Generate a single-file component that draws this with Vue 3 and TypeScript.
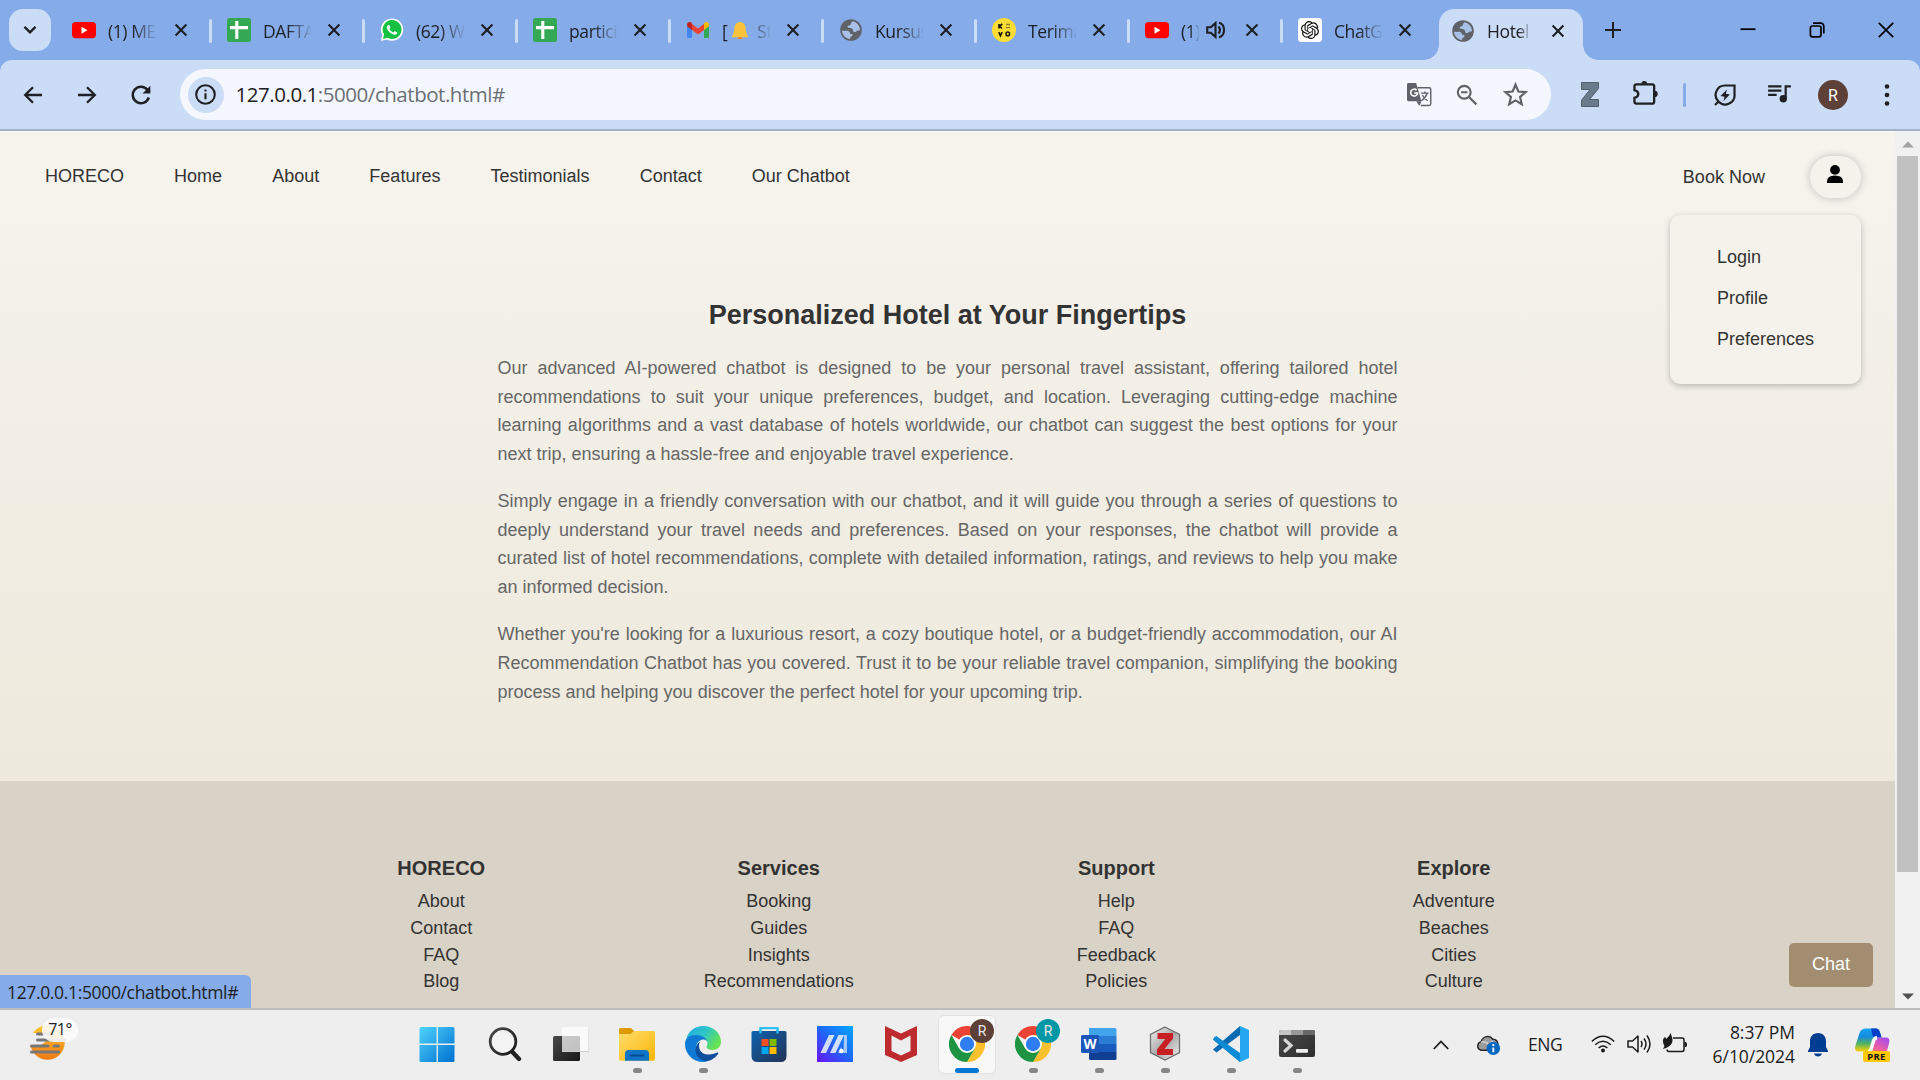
<script setup lang="ts">
interface Tab {
  icon: string
  title: string
  bell?: boolean
  audio?: boolean
}

const tabs: Tab[] = [
  { icon: 'youtube', title: '(1) ME' },
  { icon: 'sheets', title: 'DAFTA' },
  { icon: 'whatsapp', title: '(62) W' },
  { icon: 'sheets', title: 'partici' },
  { icon: 'gmail', title: 'St', bell: true },
  { icon: 'globe', title: 'Kursus' },
  { icon: 'yellow', title: 'Terima' },
  { icon: 'youtube', title: '(1)', audio: true },
  { icon: 'chatgpt', title: 'ChatG' },
]

const navLinks: string[] = ['HORECO', 'Home', 'About', 'Features', 'Testimonials', 'Contact', 'Our Chatbot']
const userMenu: string[] = ['Login', 'Profile', 'Preferences']

const paragraphs: string[] = [
  'Our advanced AI-powered chatbot is designed to be your personal travel assistant, offering tailored hotel recommendations to suit your unique preferences, budget, and location. Leveraging cutting-edge machine learning algorithms and a vast database of hotels worldwide, our chatbot can suggest the best options for your next trip, ensuring a hassle-free and enjoyable travel experience.',
  'Simply engage in a friendly conversation with our chatbot, and it will guide you through a series of questions to deeply understand your travel needs and preferences. Based on your responses, the chatbot will provide a curated list of hotel recommendations, complete with detailed information, ratings, and reviews to help you make an informed decision.',
  "Whether you're looking for a luxurious resort, a cozy boutique hotel, or a budget-friendly accommodation, our AI Recommendation Chatbot has you covered. Trust it to be your reliable travel companion, simplifying the booking process and helping you discover the perfect hotel for your upcoming trip.",
]

const footerColumns: { title: string; links: string[] }[] = [
  { title: 'HORECO', links: ['About', 'Contact', 'FAQ', 'Blog'] },
  { title: 'Services', links: ['Booking', 'Guides', 'Insights', 'Recommendations'] },
  { title: 'Support', links: ['Help', 'FAQ', 'Feedback', 'Policies'] },
  { title: 'Explore', links: ['Adventure', 'Beaches', 'Cities', 'Culture'] },
]

interface TaskApp {
  icon: string
  running?: boolean
  active?: boolean
  badge?: string
}

const taskApps: TaskApp[] = [
  { icon: 'start' },
  { icon: 'search' },
  { icon: 'taskview' },
  { icon: 'explorer', running: true },
  { icon: 'edge', running: true },
  { icon: 'store' },
  { icon: 'myasus' },
  { icon: 'mcafee' },
  { icon: 'chrome', active: true, badge: '#5d4037' },
  { icon: 'chrome', running: true, badge: '#0097a7' },
  { icon: 'word', running: true },
  { icon: 'zotero', running: true },
  { icon: 'vscode', running: true },
  { icon: 'terminal', running: true },
]
</script>

<template>
  <div class="screen">
    <svg class="defs" width="0" height="0" aria-hidden="true">
      <defs>
        <linearGradient id="gStart" x1="0" y1="0" x2="1" y2="1"><stop offset="0" stop-color="#4fd3fd" /><stop offset="1" stop-color="#0070cf" /></linearGradient>
        <linearGradient id="gDark" x1="0" y1="0" x2="1" y2="1"><stop offset="0" stop-color="#4a4a4a" /><stop offset="1" stop-color="#161616" /></linearGradient>
        <linearGradient id="gFolder" x1="0" y1="0" x2="1" y2="1"><stop offset="0" stop-color="#ffdc6e" /><stop offset="1" stop-color="#fab705" /></linearGradient>
        <linearGradient id="gEdgeTop" x1="0" y1="0" x2="1" y2="0.5"><stop offset="0" stop-color="#1fa8e8" /><stop offset="0.55" stop-color="#2fc6c8" /><stop offset="1" stop-color="#66e352" /></linearGradient>
        <linearGradient id="gStore" x1="0" y1="0" x2="1" y2="1"><stop offset="0" stop-color="#0f62b0" /><stop offset="1" stop-color="#233253" /></linearGradient>
        <linearGradient id="gAsus" x1="0" y1="1" x2="1" y2="0"><stop offset="0" stop-color="#6a12f5" /><stop offset="0.5" stop-color="#1f66fa" /><stop offset="1" stop-color="#00a8ff" /></linearGradient>
        <linearGradient id="gSun" x1="0" y1="0" x2="0" y2="1"><stop offset="0" stop-color="#fcc934" /><stop offset="1" stop-color="#f07a12" /></linearGradient>
        <linearGradient id="gHex" x1="0" y1="0" x2="1" y2="1"><stop offset="0" stop-color="#f5f5f5" /><stop offset="0.5" stop-color="#a9a9a9" /><stop offset="1" stop-color="#f0f0f0" /></linearGradient>
        <linearGradient id="gTerm" x1="0" y1="0" x2="1" y2="1"><stop offset="0" stop-color="#4b4b4b" /><stop offset="1" stop-color="#2d2d2d" /></linearGradient>
        <linearGradient id="gCopA" x1="0" y1="0" x2="0" y2="1"><stop offset="0" stop-color="#13a5ef" /><stop offset="0.35" stop-color="#1789e0" /><stop offset="0.65" stop-color="#4fb365" /><stop offset="1" stop-color="#ffd000" /></linearGradient>
        <linearGradient id="gCopB" x1="0.8" y1="0" x2="0.2" y2="1"><stop offset="0" stop-color="#a64cf0" /><stop offset="0.6" stop-color="#f0609f" /><stop offset="1" stop-color="#ff8a55" /></linearGradient>
        <symbol id="i-close" viewBox="0 0 14 14"><path d="M1.6 1.6 12.4 12.4M12.4 1.6 1.6 12.4" stroke="#1d1f24" stroke-width="2.1" fill="none" /></symbol>
        <symbol id="i-youtube" viewBox="0 0 24 24"><rect y="4" width="24" height="16.2" rx="3.6" fill="#f00" /><path d="M9.5 8.7v7l6-3.5z" fill="#fff" /></symbol>
        <symbol id="i-sheets" viewBox="0 0 24 24"><rect width="24" height="24" rx="2.5" fill="#34a853" /><path d="M9.8 3v18M3 9.6h18" stroke="#fff" stroke-width="3.1" /></symbol>
        <symbol id="i-whatsapp" viewBox="0 0 24 24"><path d="M12 .4A11.2 11.2 0 0 0 2.3 17.1L.8 23l6-1.5A11.2 11.2 0 1 0 12 .4z" fill="#fff" /><path d="M12.1 2.1a9.4 9.4 0 0 0-8 14.4L3 20.9l4.5-1.2a9.4 9.4 0 1 0 4.6-17.6z" fill="#14c143" /><path transform="translate(1.7 1.6) scale(.86)" fill="#fff" d="M17.472 14.382c-.297-.149-1.758-.867-2.03-.967-.273-.099-.471-.148-.67.15-.197.297-.767.966-.94 1.164-.173.199-.347.223-.644.075-.297-.15-1.255-.463-2.39-1.475-.883-.788-1.48-1.761-1.653-2.059-.173-.297-.018-.458.13-.606.134-.133.298-.347.446-.52.149-.174.198-.298.298-.497.099-.198.05-.371-.025-.52-.075-.149-.669-1.612-.916-2.207-.242-.579-.487-.5-.669-.51-.173-.008-.371-.01-.57-.01-.198 0-.52.074-.792.372-.272.297-1.04 1.016-1.04 2.479 0 1.462 1.065 2.875 1.213 3.074.149.198 2.096 3.2 5.077 4.487.709.306 1.262.489 1.694.625.712.227 1.36.195 1.871.118.571-.085 1.758-.719 2.006-1.413.248-.694.248-1.289.173-1.413-.074-.124-.272-.198-.57-.347" /></symbol>
        <symbol id="i-gmail" viewBox="0 0 24 24"><path d="M1 8v10.500q0 1.500 1.500 1.500H6v-8.500z" fill="#4285f4" /><path d="M23 8v10.500q0 1.500-1.500 1.500H18v-8.500z" fill="#34a853" /><path d="M18 6v6l5-3.700V6.500C23 3.700 20 3.300 18.300 4.700z" fill="#fbbc04" /><path d="M6 12V6l6 4.500L18 6v6l-6 4.500z" fill="#ea4335" /><path d="M1 6.500v1.800L6 12V6l-.3-1.300C4 3.300 1 3.700 1 6.500z" fill="#c5221f" /></symbol>
        <symbol id="i-globe" viewBox="0 0 24 24"><circle cx="12" cy="12" r="10.800" fill="#5f6368" /><path d="M3 12.500c2.500 1 4 0 6 .4 2.300.4 1.500 3 3.500 3.200 2 .2 1 2.300-.6 2.600-.7.200-.6 1.600-1 2.300C6.500 20.500 3.200 17 3 12.500zM13.800 3.300c3.800.8 7 4.300 7.200 8.500-.7 1.600-1.700.5-2.800.9-1.600.5-1.400 2-3 1.300-1.900-.8-.6-2.600-2.200-3.500-1.500-.8-4.300-.3-4.400-1.800-.1-1.600 2.600-1 3.100-2.300.4-1.200.800-2.600 2.100-3.100z" fill="#a9c0e8" /></symbol>
        <symbol id="i-yellow" viewBox="0 0 24 24"><circle cx="12" cy="12" r="12" fill="#fddd35" /><path d="M7 6v4.500M10.300 6l-2.800 2 2.500 2.500M6.800 14.200l1.600 3.600 1.700-3.600" stroke="#1c1a10" stroke-width="1.700" fill="none" /><path d="M14 6.500h4M14 9.700h4" stroke="#8d7c28" stroke-width="1.300" /><circle cx="15.800" cy="15.900" r="1.800" stroke="#1c1a10" stroke-width="1.500" fill="none" /></symbol>
        <symbol id="i-chatgpt" viewBox="0 0 24 24"><rect width="24" height="24" rx="3.500" fill="#fff" /><path transform="translate(3 3) scale(.75)" fill="#111" d="M22.2819 9.8211a5.9847 5.9847 0 0 0-.5157-4.9108 6.0462 6.0462 0 0 0-6.5098-2.9A6.0651 6.0651 0 0 0 4.9807 4.1818a5.9847 5.9847 0 0 0-3.9977 2.9 6.0462 6.0462 0 0 0 .7427 7.0966 5.98 5.98 0 0 0 .511 4.9107 6.051 6.051 0 0 0 6.5146 2.9001A5.9847 5.9847 0 0 0 13.2599 24a6.0557 6.0557 0 0 0 5.7718-4.2058 5.9894 5.9894 0 0 0 3.9977-2.9001 6.0557 6.0557 0 0 0-.7475-7.0729zm-9.022 12.6081a4.4755 4.4755 0 0 1-2.8764-1.0408l.1419-.0804 4.7783-2.7582a.7948.7948 0 0 0 .3927-.6813v-6.7369l2.02 1.1686a.071.071 0 0 1 .038.052v5.5826a4.504 4.504 0 0 1-4.4945 4.4944zm-9.6607-4.1254a4.4708 4.4708 0 0 1-.5346-3.0137l.142.0852 4.783 2.7582a.7712.7712 0 0 0 .7806 0l5.8428-3.3685v2.3324a.0804.0804 0 0 1-.0332.0615L9.74 19.9502a4.4992 4.4992 0 0 1-6.1408-1.6464zM2.3408 7.8956a4.485 4.485 0 0 1 2.3655-1.9728V11.6a.7664.7664 0 0 0 .3879.6765l5.8144 3.3543-2.0201 1.1685a.0757.0757 0 0 1-.071 0l-4.8303-2.7865A4.504 4.504 0 0 1 2.3408 7.872zm16.5963 3.8558L13.1038 8.364 15.1192 7.2a.0757.0757 0 0 1 .071 0l4.8303 2.7913a4.4944 4.4944 0 0 1-.6765 8.1042v-5.6772a.79.79 0 0 0-.407-.667zm2.0107-3.0231l-.142-.0852-4.7735-2.7818a.7759.7759 0 0 0-.7854 0L9.409 9.2297V6.8974a.0662.0662 0 0 1 .0284-.0615l4.8303-2.7866a4.4992 4.4992 0 0 1 6.6802 4.66zM8.3065 12.863l-2.02-1.1638a.0804.0804 0 0 1-.038-.0567V6.0742a4.4992 4.4992 0 0 1 7.3757-3.4537l-.142.0805L8.704 5.459a.7948.7948 0 0 0-.3927.6813zm1.0976-2.3654l2.602-1.4998 2.6069 1.4998v2.9994l-2.5974 1.4997-2.6067-1.4997Z" /></symbol>

        <symbol id="a-start" viewBox="0 0 36 36"><path d="M2 1h15.600v16.600H.5V2.500Q.5 1 2 1zM18.900 1H34q1.500 0 1.500 1.500v15.100H18.900zM.5 18.900h17.100V36H2Q.5 36 .5 34.500zM18.900 18.900h16.600v15.600Q35.500 36 34 36H18.900z" fill="url(#gStart)" /></symbol>
        <symbol id="a-search" viewBox="0 0 36 36"><path d="M24.500 25 32 33" stroke="#222" stroke-width="4.400" stroke-linecap="round" /><circle cx="16" cy="15.500" r="12.800" fill="#f3f3f3" stroke="url(#gDark)" stroke-width="2.800" /></symbol>
        <symbol id="a-taskview" viewBox="0 0 36 36"><rect x="0" y="10" width="27" height="25" rx="1.500" fill="url(#gDark)" /><rect x="9" y="1" width="27" height="25" rx="1.500" fill="#fff" fill-opacity=".72" /><path d="M9 25.500h27V2" stroke="#cfcfcf" fill="none" /></symbol>
        <symbol id="a-explorer" viewBox="0 0 36 36"><path d="M0 3.500Q0 2 1.500 2h10.500l3 3v5H0z" fill="#dd9a05" /><path d="M0 8h11.500l3.500-3H34.500Q36 5 36 6.500V33q0 1.800-1.500 1.800h-33Q0 34.800 0 33z" fill="url(#gFolder)" /><path d="M6 34.800v-7Q6 24 9.500 24h17q3.500 0 3.500 3.800v7z" fill="#0f74c8" /><path d="M11.500 29.500h13" stroke="#0a4c93" stroke-width="2" stroke-linecap="round" /></symbol>
        <symbol id="a-edge" viewBox="0 0 36 36"><path d="M1 14C3 5 10 0 18 0c10.500 0 18 7.500 18 15.500 0 5-3.500 8.500-8.500 8.500-4 0-6-1.500-6-3 0-1 1-1.500 1-4 0-3.500-3.500-6-8.500-6-6 0-11 3-13 3z" fill="url(#gEdgeTop)" /><path d="M0 18C0 12 5 9 11 9c7 0 11.500 4 11.500 8 0-2.500-2.500-4-5-3.500C12 15 10 20 12 26c2 6 8 9 12 8.500C22 35.500 20 36 18 36 8 36 0 28 0 18z" fill="#0f7bd6" /><path d="M15 15.500c-2.500 5-.5 13 8.500 13 4 0 7-1.500 9-2 1-.2 1.200.7.5 1.500C30 32.500 25 35.300 21 35c-6.500-.5-11-6-10.500-11.500.3-3.500 2-6.500 4.500-8z" fill="#0f4f9e" /></symbol>
        <symbol id="a-store" viewBox="0 0 36 36"><path d="M9.500 7V2.200h17V7" stroke="#2fc1f5" stroke-width="2.200" fill="none" /><path d="M.5 6.500Q.5 5 2 5h32q1.500 0 1.500 1.500V30q0 6-6 6h-23q-6 0-6-6z" fill="url(#gStore)" /><path d="M9.500 2.200V7.500M26.500 2.200V7.500" stroke="#2fc1f5" stroke-width="2.200" /><path d="M10.500 13h7v7h-7z" fill="#f25022" /><path d="M18.500 13h7v7h-7z" fill="#7fba00" /><path d="M10.500 21h7v7h-7z" fill="#00a4ef" /><path d="M18.500 21h7v7h-7z" fill="#ffb900" /></symbol>
        <symbol id="a-myasus" viewBox="0 0 36 36"><rect width="36" height="36" fill="url(#gAsus)" /><path d="M3.500 27 12 9h5.500L9 27zM13 27 21.500 9H27L18.500 27z" fill="#e3ecff" fill-opacity=".9" /><path d="M27 9h3v18h-3.500zM21 27l3-6 2 6z" fill="#bcd5ff" fill-opacity=".85" /><circle cx="24.500" cy="25" r="2.200" fill="#fff" /></symbol>
        <symbol id="a-mcafee" viewBox="0 0 36 36"><path d="M2 0l16 7.500L34 0v29l-16 7-16-7z" fill="#bd2b2e" /><path d="M8.500 9.500 18 14.500l9.500-5v15.500L18 29.500 8.500 25z" fill="#eee" /></symbol>
        <symbol id="a-chrome" viewBox="0 0 36 36"><path d="M18 18 2.400 9A18 18 0 0 1 33.600 9z" fill="#ea4335" /><path d="M18 9h15.600A18 18 0 0 1 18 36l7.800-13.500z" fill="#fbc02d" /><path d="M10.200 22.500 2.400 9A18 18 0 0 0 18 36l7.800-13.500z" fill="#1e9442" /><circle cx="18" cy="18" r="9" fill="#fff" /><circle cx="18" cy="18" r="7.200" fill="#2f7df0" /></symbol>
        <symbol id="a-word" viewBox="0 0 36 36"><path d="M8 2h26q1.500 0 1.500 1.500V10H8z" fill="#41a5ee" /><path d="M8 10h27.500v8H8z" fill="#2b7cd3" /><path d="M8 18h27.500v8H8z" fill="#185abd" /><path d="M8 26h27.500v6.500Q35.500 34 34 34H9.500Q8 34 8 32.500z" fill="#103f91" /><rect x="0" y="9" width="18" height="18" rx="1.500" fill="#1b57b8" /><text x="9" y="22.800" text-anchor="middle" font-family="Open Sans, sans-serif" font-weight="700" font-size="13.500" fill="#fff">W</text></symbol>
        <symbol id="a-zotero" viewBox="0 0 36 36"><path d="M18 1l14.500 7.500v18L18 34 3.500 26.500v-18z" fill="url(#gHex)" stroke="#6e6e6e" stroke-width="1.300" /><path d="M10.500 7h15.500v5.500L17.500 23H26v6H10V23.500L18.300 13h-7.800z" fill="#c81f25" /></symbol>
        <symbol id="a-vscode" viewBox="0 0 36 36"><path d="M0 13.500 3.500 10.500 27 27v9z" fill="#1187cf" /><path d="M0 23.500l3.500 3L27 9V0z" fill="#0a6bb3" /><path d="M27 0l9 4v28l-9 4z" fill="#25a7f0" /><path d="M0 13.500Q1.500 9.500 4 10.500L27 28v8z" fill="#0f8ad4" /></symbol>
        <symbol id="a-terminal" viewBox="0 0 36 36"><path d="M0 6q0-2 2-2h32q2 0 2 2v23q0 2-2 2H2q-2 0-2-2z" fill="url(#gTerm)" /><path d="M12 4h12v5H12z" fill="#9a9a9a" /><path d="M24 4h10q2 0 2 2v3H24z" fill="#696969" /><path d="M0 9V6q0-2 2-2h10v5z" fill="#c6c6c6" /><path d="M6 14l6 5.500-6 5.500" stroke="#d8d8d8" stroke-width="3.200" fill="none" stroke-linecap="round" /><rect x="17" y="23" width="12" height="3.800" rx="1" fill="#efefef" /></symbol>
      </defs>
    </svg>

    <header class="tabstrip">
      <button class="tab-search">
        <svg width="14" height="10" viewBox="0 0 14 10"><path d="M1.500 1.800 7 7.300l5.500-5.500" stroke="#1d1f24" stroke-width="2.400" fill="none" /></svg>
      </button>
      <div v-for="(tab, i) in tabs" :key="i" class="tab" :class="{ inner: i > 0 }">
        <svg class="favicon"><use :href="'#i-' + tab.icon" /></svg>
        <span class="tab-title" :class="{ short: tab.audio }">
          <template v-if="tab.bell">[<svg class="bell-emoji" viewBox="0 0 18 20"><path d="M9 1C4.500 1 3 5 3 9c0 4-2.500 6-2.500 8h17c0-2-2.500-4-2.500-8 0-4-1.500-8-6-8z" fill="#fbc33c" /><path d="M6.500 18h5" stroke="#f08a24" stroke-width="2" /></svg></template>{{ tab.title }}
        </span>
        <svg v-if="tab.audio" class="audio" viewBox="0 0 20 18"><path d="M1.200 6.200h3.600L9.500 2v14l-4.700-4.200H1.200zM12.500 5.500q3 3.500 0 7M13 1.700q5 1.300 5 7.300t-5 7.300" fill="none" stroke="#1d1f24" stroke-width="2.100" /></svg>
        <svg class="tab-close"><use href="#i-close" /></svg>
        <i v-if="i < tabs.length - 1" class="tab-sep"></i>
      </div>
      <div class="tab active">
        <svg class="favicon"><use href="#i-globe" /></svg>
        <span class="tab-title">Hotel</span>
        <svg class="tab-close"><use href="#i-close" /></svg>
      </div>
      <svg class="new-tab" viewBox="0 0 16 16"><path d="M8 0v16M0 8h16" stroke="#1d1f24" stroke-width="2" /></svg>
      <div class="window-buttons">
        <svg viewBox="0 0 16 16"><path d="M.5 7.200h15" stroke="#000" stroke-width="1.800" /></svg>
        <svg viewBox="0 0 16 16"><rect x="1.400" y="4" width="10.600" height="10.800" rx="2" fill="none" stroke="#000" stroke-width="1.700" /><path d="M4 1.200h7.500q3.300 0 3.300 3.300v7" fill="none" stroke="#000" stroke-width="1.700" /></svg>
        <svg viewBox="0 0 16 16"><path d="M.8.800l14.400 14.400M15.200.8.800 15.200" stroke="#000" stroke-width="1.700" /></svg>
      </div>
    </header>

    <div class="toolbar-wrap">
      <div class="toolbar">
        <svg class="tb-icon back" viewBox="0 0 20 20"><path d="M19 10H3M10 2.200 2.200 10l7.800 7.800" fill="none" stroke="#1f2023" stroke-width="2.300" /></svg>
        <svg class="tb-icon forward" viewBox="0 0 20 20"><path d="M1 10h16M10 2.200l7.800 7.800-7.800 7.800" fill="none" stroke="#1f2023" stroke-width="2.300" /></svg>
        <svg class="tb-icon reload" viewBox="0 0 20 20"><path d="M17.800 12.500A8.200 8.200 0 1 1 16.400 4.800L18.800 7" fill="none" stroke="#1f2023" stroke-width="2.500" /><path d="M19.300.8v7.700h-7.800z" fill="#1f2023" /></svg>
        <div class="omnibox">
          <span class="site-info">
            <svg width="21" height="21" viewBox="0 0 21 21"><circle cx="10.500" cy="10.500" r="9.300" fill="none" stroke="#1f2023" stroke-width="2.100" /><path d="M10.500 9.300v6M10.500 5.400v2.100" stroke="#1f2023" stroke-width="2.100" /></svg>
          </span>
          <span class="url">127.0.0.1<em>:5000/chatbot.html#</em></span>
          <svg class="translate" viewBox="0 0 26 26"><path d="M11 6h12q1.700 0 1.700 1.700v15q0 1.700-1.700 1.700h-8.500" fill="none" stroke="#5f6368" stroke-width="1.500" /><path d="M1.500 1h8l5.500 19H1.500Q0 20 0 18.500v-16Q0 1 1.500 1z" fill="#5f6368" /><path d="M9.500 20H15l-2 5z" fill="#5f6368" /><path d="M10 8.500A3.600 3.600 0 1 0 11 11.500H7.500" fill="none" stroke="#fff" stroke-width="1.600" /><path d="M14.500 11.500h8M18.500 9.800v1.700M21 11.500q-1.500 5-6 8M16 13.500q2 4 5.500 6" fill="none" stroke="#5f6368" stroke-width="1.400" /></svg>
          <svg class="zoom-out" viewBox="0 0 24 24"><circle cx="9" cy="9" r="7" fill="none" stroke="#5f6368" stroke-width="2.300" /><path d="M14.200 14.200l8 8M5.500 9h7" stroke="#5f6368" stroke-width="2.400" /></svg>
          <svg class="star" viewBox="0 0 24 24"><path d="M12 2.500l2.700 6.600 7.100.6-5.400 4.700 1.600 7-6-3.700-6 3.700 1.600-7-5.400-4.700 7.100-.6z" fill="none" stroke="#5f6368" stroke-width="2.100" /></svg>
        </div>
        <svg class="ext-z" viewBox="0 0 18 25"><path d="M.5.500h17v6L8.500 17.500h9v7H.5v-6.300L9 7.500H.5z" fill="#697c8c" stroke="#555f69" /></svg>
        <svg class="ext-puzzle" viewBox="0 0 26 26"><path d="M3.500 4.500H20q2 0 2 2V22.500q0 2-2 2H3.500q-2 0-2-2v-4q4-.8 4-4t-4-4v-4q0-2 2-2z" fill="none" stroke="#1f2023" stroke-width="2.400" /><path d="M8.700 4a3 3 0 0 1 6 0zM22.500 11.300a3.200 3.200 0 0 1 0 6.400z" fill="#1f2023" /></svg>
        <i class="tb-divider"></i>
        <svg class="leaf" viewBox="0 0 22 22"><path d="M20.500 1.500v8.500A9.300 9.300 0 0 1 4.500 17.500 9.300 9.300 0 0 1 11 1.500zM1 21l3.500-3.500" fill="none" stroke="#1f2023" stroke-width="2.200" /><path d="M13 5.500 6.500 12l4 .8L9.500 17l6.300-6.500-4-.8z" fill="#1f2023" /></svg>
        <svg class="music" viewBox="0 0 24 20"><path d="M0 2.500h14M0 7h14M0 11.500h9M18.500 15V2.500H24" fill="none" stroke="#1f2023" stroke-width="2.300" /><circle cx="16" cy="15.500" r="3.900" fill="#1f2023" /></svg>
        <span class="avatar">R</span>
        <svg class="dots" viewBox="0 0 6 22"><circle cx="3" cy="2.500" r="2.300" fill="#1f2023" /><circle cx="3" cy="11" r="2.300" fill="#1f2023" /><circle cx="3" cy="19.500" r="2.300" fill="#1f2023" /></svg>
      </div>
    </div>

    <div class="viewport">
      <div class="page">
        <nav class="site-nav">
          <a v-for="link in navLinks" :key="link">{{ link }}</a>
          <a class="book">Book Now</a>
          <div class="user">
            <button class="user-btn">
              <svg width="16" height="18" viewBox="0 0 16 18"><circle cx="8" cy="4.900" r="4.900" fill="#000" /><path d="M0 18v-1.500q0-6 8-6t8 6V18z" fill="#000" /></svg>
            </button>
            <ul class="user-menu">
              <li v-for="item in userMenu" :key="item">{{ item }}</li>
            </ul>
          </div>
        </nav>
        <main class="intro">
          <h2>Personalized Hotel at Your Fingertips</h2>
          <p v-for="(text, i) in paragraphs" :key="i">{{ text }}</p>
        </main>
        <footer class="site-footer">
          <div v-for="col in footerColumns" :key="col.title" class="footer-col">
            <h3>{{ col.title }}</h3>
            <a v-for="link in col.links" :key="link">{{ link }}</a>
          </div>
        </footer>
      </div>
      <div class="scrollbar">
        <svg width="12" height="7" viewBox="0 0 12 7"><path d="M0 6.500 6 .5l6 6z" fill="#a3a3a3" /></svg>
        <i class="thumb"></i>
        <svg class="down" width="12" height="7" viewBox="0 0 12 7"><path d="M0 .5l6 6 6-6z" fill="#505050" /></svg>
      </div>
      <button class="chat-btn">Chat</button>
      <div class="status">127.0.0.1:5000/chatbot.html#</div>
    </div>

    <div class="taskbar">
      <div class="weather">
        <svg width="36" height="36" viewBox="0 0 36 36"><circle cx="17.500" cy="17.500" r="17.200" fill="url(#gSun)" /><path d="M0 20V8h19q-1 8-8 12z" fill="#eee" /><path d="M7.500 9h12M7.500 15h27M1.500 21h16.500M24 21h4.500M1.500 27h27" stroke="#777" stroke-width="3" stroke-linecap="round" /></svg>
        <span class="temp">71°</span>
      </div>
      <div class="apps">
        <div v-for="(app, i) in taskApps" :key="i" class="app" :class="{ active: app.active }">
          <svg class="app-icon"><use :href="'#a-' + app.icon" /></svg>
          <span v-if="app.badge" class="profile-badge" :style="{ background: app.badge }">R</span>
          <i v-if="app.running || app.active" class="indicator"></i>
        </div>
      </div>
      <div class="tray">
        <svg class="chev" viewBox="0 0 16 10"><path d="M.8 9 8 1.500 15.200 9" fill="none" stroke="#1b1b1b" stroke-width="1.800" /></svg>
        <svg class="cloud" viewBox="0 0 26 22"><path d="M5 16.500a4.700 4.700 0 0 1 .3-9C7 2 14 0 17.500 5q5 0 5.500 6l-6 5.500z" fill="#9c9c9c" stroke="#262626" stroke-width="1.500" /><path d="M5 8q5-1 8 2l5-3" fill="none" stroke="#dcdcdc" stroke-width="1.500" /><circle cx="18" cy="14.500" r="7" fill="#0067c0" /><path d="M18 13.500v5M18 10v2" stroke="#fff" stroke-width="1.900" /></svg>
        <span class="lang">ENG</span>
        <svg class="wifi" viewBox="0 0 24 18"><path d="M.8 6.500Q12-4 23.200 6.500M4.200 9.800q7.800-7 15.600 0M7.600 13q4.400-4 8.800 0" fill="none" stroke="#1b1b1b" stroke-width="1.500" /><circle cx="12" cy="15.500" r="2" fill="#1b1b1b" /></svg>
        <svg class="vol" viewBox="0 0 24 20"><path d="M1 7h4.500L11 2v16l-5.500-5H1zM14 7q2 3 0 6M17 4.500q4 5.500 0 11M20 1.500q6 8.500 0 17" fill="none" stroke="#1b1b1b" stroke-width="1.500" stroke-linejoin="round" /></svg>
        <svg class="battery" viewBox="0 0 24 20"><path d="M10 5h9q2 0 2 2v9.500q0 2-2 2H6q-2 0-2-2" fill="none" stroke="#1b1b1b" stroke-width="1.500" /><path d="M21.500 9h1.200q1.300 0 1.300 2.500t-1.300 2.500h-1.200zM7.500 0C9.500 5 10.500 8 8 11.500 6.500 14 3 15 0 16l1.500-3C-1 9-.5 5 2.500 4l.5 2C5 4.500 6.500 3 7.500 0z" fill="#1b1b1b" /></svg>
        <div class="clock"><span>8:37 PM</span><span>6/10/2024</span></div>
        <svg class="bell" viewBox="0 0 20 24"><path d="M10 0C5 0 2 3.500 2 8.500V14l-2 4v1h20v-1l-2-4V8.500C18 3.500 15 0 10 0zM6 20.500q1 3 4 3t4-3z" fill="#003e92" /></svg>
        <div class="copilot">
          <svg width="35" height="28" viewBox="0 0 35 28"><path d="M11 .5h10q3 0 4 4l1.500 5H20l-3 10q-1 4-4 4H3q-4 0-2.500-6L4.500 5q1.500-4.500 6.500-4.500z" fill="url(#gCopA)" /><path d="M16 .5h5q3 0 4 4l1.500 5H20q-2 0-3-4z" fill="#0a3fc9" /><path d="M20 9.500h11q4.500 0 3 6l-2.500 9q-1 3-4 3H13q3.500-1 4.500-6z" fill="url(#gCopB)" /><path d="M22 9.500q-3 .5-4 5l-2 7q-1 2.500-3 2.500" fill="none" stroke="#fff" stroke-width="3.500" /></svg>
          <span>PRE</span>
        </div>
      </div>
    </div>
  </div>
</template>

<style>
html,
body {
  margin: 0;
  overflow: hidden;
}
</style>

<style scoped>
.screen {
  width: 1920px;
  height: 1080px;
  display: flex;
  flex-direction: column;
  overflow: hidden;
  font-family: 'Open Sans', 'Noto Sans', sans-serif;
  color: #1d1f24;
}
.defs { position: absolute; }
svg { display: block; flex: none; }
button { border: 0; padding: 0; font: inherit; }

.tabstrip {
  height: 60px;
  flex: none;
  display: flex;
  background: #85ace9;
}
.tab-search {
  width: 42px;
  height: 42px;
  margin: 9px 8px 0 9px;
  flex: none;
  border-radius: 14px;
  background: #cbdcf7;
  display: flex;
  align-items: center;
  justify-content: center;
}
.tab {
  width: 140px;
  padding-left: 13px;
  flex: none;
  display: flex;
  align-items: center;
}
.tab.inner { width: 138px; padding-left: 15px; }
.favicon { width: 24px; height: 24px; margin-right: 12px; }
.tab-title {
  width: 48px;
  flex: none;
  display: flex;
  align-items: center;
  overflow: hidden;
  white-space: nowrap;
  font-size: 17.500px;
  line-height: 26px;
  padding-top: 1px;
  letter-spacing: -0.4px;
  -webkit-mask-image: linear-gradient(90deg, #000 50%, transparent 104%);
  mask-image: linear-gradient(90deg, #000 50%, transparent 104%);
}
.tab-title.short { width: 18px; }
.bell-emoji { width: 18px; height: 19px; margin: 0 8px 0 4px; }
.audio { width: 20px; height: 18px; margin: 0 -9px 0 7px; }
.tab-close { width: 14px; height: 14px; margin-left: 18px; }
.inner .tab-close { margin-left: 16px; }
.tab.inner .audio + .tab-close { margin-left: 28px; }
.tab-sep {
  width: 3px;
  height: 24px;
  margin: 2px 0 0 auto;
  border-radius: 1.500px;
  background: #cbdcf7;
}
.tab.active {
  position: relative;
  width: 132px;
  height: 51px;
  margin: 9px 0 0 3px;
  padding-left: 12px;
  border-radius: 15px 15px 0 0;
  background: #cbdcf7;
}
.tab.active > * { position: relative; top: -4px; }
.tab.active .favicon { margin-right: 12px; }
.tab.active .tab-title {
  width: 42px;
  -webkit-mask-image: linear-gradient(90deg, #000 75%, transparent 105%);
  mask-image: linear-gradient(90deg, #000 75%, transparent 105%);
}
.tab.active .tab-close { margin-left: 22px; }
.tab.active::before,
.tab.active::after {
  content: '';
  position: absolute;
  top: auto;
  bottom: 0;
  width: 15px;
  height: 15px;
}
.tab.active::before { left: -15px; background: radial-gradient(circle at 0 0, transparent 14.500px, #cbdcf7 15px); }
.tab.active::after { right: -15px; background: radial-gradient(circle at 100% 0, transparent 14.500px, #cbdcf7 15px); }
.new-tab { width: 16px; height: 16px; margin: 22px 0 0 22px; }
.window-buttons {
  display: flex;
  gap: 53px;
  margin: 22px 26px 0 auto;
}
.window-buttons svg { width: 16px; height: 16px; }

.toolbar-wrap { height: 71px; flex: none; background: #85ace9; }
.toolbar {
  height: 69px;
  display: flex;
  align-items: center;
  background: #cbdcf7;
  border-bottom: 2px solid #a2b1cc;
  border-radius: 12px 12px 0 0;
}
.tb-icon { width: 20px; height: 20px; }
.back { margin-left: 23px; }
.forward { margin-left: 34px; }
.reload { margin-left: 34px; }
.omnibox {
  width: 1371px;
  height: 51px;
  margin-left: 29px;
  border-radius: 26px;
  background: #f4f7fd;
  display: flex;
  align-items: center;
  flex: none;
}
.site-info {
  width: 36px;
  height: 36px;
  margin-left: 7.500px;
  border-radius: 50%;
  background: #cbdcf7;
  display: flex;
  align-items: center;
  justify-content: center;
}
.url { margin: 0 0 2px 12px; font-size: 20.500px; letter-spacing: -0.46px; color: #1f2023; }
.url em { font-style: normal; color: #6b6f75; }
.translate { width: 25px; height: 25px; margin-left: auto; }
.zoom-out { width: 22px; height: 22px; margin-left: 24px; }
.star { width: 25px; height: 25px; margin: 0 23.500px 0 24.500px; }
.ext-z { width: 18px; height: 25px; margin-left: 30px; }
.ext-puzzle { width: 25px; height: 25px; margin: -4px 0 0 34px; }
.tb-divider { width: 3px; height: 24px; margin-left: 25px; border-radius: 2px; background: #85ace9; }
.leaf { width: 22px; height: 22px; margin-left: 28px; }
.music { width: 23px; height: 19px; margin: -3px 0 0 32px; }
.avatar {
  width: 30px;
  height: 30px;
  margin-left: 27px;
  border-radius: 50%;
  background: #5d4037;
  color: #fff;
  font: 16px/31px Roboto, sans-serif;
  text-align: center;
}
.dots { width: 6px; height: 22px; margin-left: 36px; }

.viewport {
  position: relative;
  height: 877px;
  flex: none;
  display: flex;
}
.page {
  width: 1895px;
  height: 877px;
  overflow: hidden;
  background: linear-gradient(#f7f4ee 0, #f4f1ea 150px, #ede9dc 650px);
  font: 18px/28.800px 'Liberation Sans', Arial, sans-serif;
  color: #333;
}
.site-nav {
  height: 90px;
  padding: 0 34px 0 45px;
  display: flex;
  align-items: center;
  gap: 50.100px;
}
.book { margin: 2px -5px 0 auto; }
.user { position: relative; }
.user-btn {
  width: 51px;
  height: 42px;
  margin-top: 2px;
  padding: 0 2px 6px 0;
  display: flex;
  align-items: center;
  justify-content: center;
  border-radius: 22px;
  background: #f5f2eb;
  box-shadow: 0 0 9px rgba(0, 0, 0, 0.22);
}
.user-menu {
  position: absolute;
  top: 61px;
  right: 0;
  width: 191px;
  height: 169px;
  box-sizing: border-box;
  margin: 0;
  padding: 28px 0 0 47px;
  list-style: none;
  border-radius: 11px;
  background: #f5f2eb;
  box-shadow: 0 2px 6px rgba(0, 0, 0, 0.24);
}
.user-menu li { height: 41px; }
.intro {
  width: 900px;
  height: 560px;
  margin: 0 auto;
  box-sizing: border-box;
  padding-top: 73px;
}
.intro h2 {
  margin: 0 0 16.500px;
  font-size: 27px;
  line-height: 43.200px;
  text-align: center;
}
.intro p {
  margin: 0 0 18px;
  text-align: justify;
  color: #666;
}
.site-footer {
  height: 227px;
  box-sizing: border-box;
  padding: 72px 272.500px 0;
  display: flex;
  background: #d9d2c6;
}
.footer-col {
  width: 337.500px;
  display: flex;
  flex-direction: column;
  align-items: center;
  line-height: 26.800px;
}
.footer-col h3 { margin: 0 0 5px; font-size: 20px; line-height: 30px; }

.scrollbar {
  width: 25px;
  display: flex;
  flex-direction: column;
  align-items: center;
  background: #f1f1f1;
}
.scrollbar svg { margin-top: 10px; }
.thumb { width: 21px; height: 716px; margin-top: 8px; background: #c1c1c1; }
.scrollbar .down { margin: auto 0 8px; }
.chat-btn {
  position: absolute;
  right: 47px;
  top: 812px;
  width: 84px;
  height: 44px;
  padding-bottom: 3px;
  border-radius: 5px;
  background: #a38d70;
  color: #fff;
  font: 18px/40px 'Liberation Sans', Arial, sans-serif;
}
.status {
  position: absolute;
  left: 0;
  bottom: 0;
  width: 251px;
  height: 33px;
  box-sizing: border-box;
  padding-left: 7px;
  border-radius: 0 6px 0 0;
  background: #85ace9;
  font-size: 17.500px;
  letter-spacing: -0.35px;
  line-height: 34px;
  white-space: nowrap;
}

.taskbar {
  height: 72px;
  box-sizing: border-box;
  flex: none;
  display: flex;
  border-top: 2px solid #bdbdbd;
  background: #eee;
}
.weather { position: relative; width: 404px; padding: 15px 0 0 30px; box-sizing: border-box; }
.temp {
  position: absolute;
  left: 42px;
  top: 8px;
  width: 36px;
  height: 24px;
  border-radius: 12px;
  background: rgba(252, 252, 252, 0.88);
  font-size: 16px;
  line-height: 23px;
  letter-spacing: -0.6px;
  text-align: center;
}
.apps { display: flex; }
.app {
  position: relative;
  width: 66px;
  display: flex;
  flex-direction: column;
  align-items: center;
}
.app:first-child { margin-right: 2px; }
.app-icon { width: 36px; height: 36px; margin-top: 16px; position: relative; }
.app.active::before {
  content: '';
  position: absolute;
  left: 4px;
  top: 5px;
  width: 56px;
  height: 57px;
  border: 1px solid #e2e2e2;
  border-radius: 6px;
  background: #f8f8f8;
}
.profile-badge {
  position: absolute;
  left: 36px;
  top: 9px;
  width: 24px;
  height: 24px;
  border-radius: 50%;
  color: #e8e8e8;
  font: 14px/25px Roboto, sans-serif;
  text-align: center;
}
.indicator { position: relative; width: 9px; height: 5px; margin-top: 6px; border-radius: 3px; background: #868686; }
.active .indicator { width: 24px; background: #0078d4; }
.tray { display: flex; align-items: center; margin-left: 103px; }
.chev { width: 16px; height: 10px; }
.cloud { width: 25px; height: 22px; margin-left: 27px; }
.lang { width: 36px; margin: 0 0 2px 27px; font-size: 17.500px; letter-spacing: -0.4px; }
.wifi { width: 24px; height: 18px; margin: -2px 0 0 27px; }
.vol { width: 24px; height: 20px; margin: -2px 0 0 12px; }
.battery { width: 24px; height: 20px; margin: -4px 0 0 12px; }
.clock {
  width: 108px;
  margin-bottom: 2px;
  display: flex;
  flex-direction: column;
  align-items: flex-end;
  font-size: 17.500px;
  line-height: 24px;
  letter-spacing: -0.05px;
}
.bell { width: 20px; height: 24px; margin-left: 13px; }
.copilot { position: relative; width: 35px; height: 34px; margin-left: 27px; }
.copilot span {
  position: absolute;
  left: 8px;
  top: 23px;
  width: 27px;
  height: 11px;
  border-radius: 2px;
  background: #ffc800;
  color: #111;
  font-size: 9.500px;
  font-weight: 700;
  line-height: 11px;
  text-align: center;
  letter-spacing: 0.3px;
}
</style>
